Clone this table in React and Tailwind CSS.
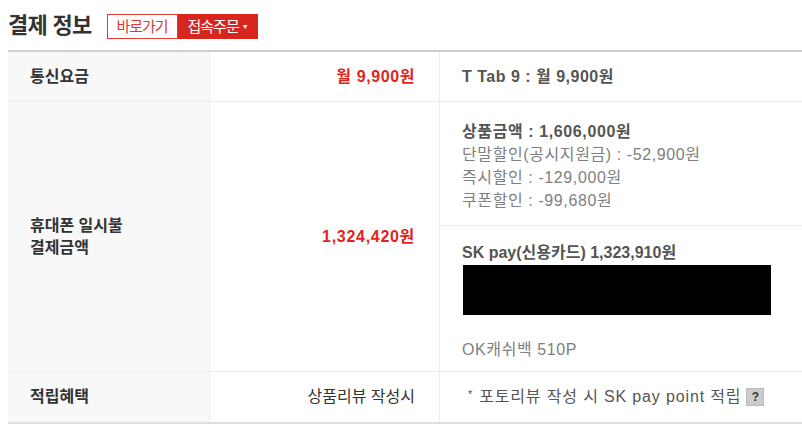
export default function App() {
  const font = { fontFamily: '"Liberation Sans", "Noto Sans CJK KR", sans-serif' };
  return (
    <div className="w-[802px] h-[438px] bg-white overflow-hidden" style={font}>
      <div className="flex items-center h-[50px] pl-[8px] pt-[1px]">
        <span className="text-[22px] font-bold text-[#333] tracking-[-0.7px] leading-none">결제 정보</span>
        <div className="flex ml-[15px] h-[25px] mt-[1px]">
          <span className="w-[71px] flex items-center justify-center border border-[#e23a2f] text-[#e23a2f] text-[15px] tracking-[-1px] leading-none bg-white">바로가기</span>
          <span className="w-[80px] flex items-center justify-center bg-[#d7261e] text-white text-[15px] tracking-[-1px] leading-none">
            접속주문
            <span className="ml-[3px] text-[7px]">▼</span>
          </span>
        </div>
      </div>
      <div className="ml-[8px] border-t-2 border-[#cfcfcf] border-b-2 border-b-[#dedede]">
        {/* Row 1 */}
        <div className="flex h-[50px] border-b border-[#ededed]">
          <div className="w-[202px] bg-[#f8f8f8] border-r border-[#ededed] flex items-center pl-[22px] text-[16px] font-bold text-[#333]">통신요금</div>
          <div className="w-[230px] border-r border-[#ededed] flex items-center justify-end pr-[24px] text-[16px] font-bold text-[#e0261c] tracking-[0.6px]">월 9,900원</div>
          <div className="flex-1 flex items-center pl-[22px] text-[16px] font-bold text-[#555] tracking-[0.5px]">T Tab 9 : 월 9,900원</div>
        </div>
        {/* Row 2 */}
        <div className="flex h-[270px] border-b border-[#ededed]">
          <div className="w-[202px] bg-[#f8f8f8] border-r border-[#ededed] flex flex-col justify-center pl-[22px] text-[16px] font-bold text-[#333] leading-[22px]">
            <span>휴대폰 일시불</span>
            <span>결제금액</span>
          </div>
          <div className="w-[230px] border-r border-[#ededed] flex items-center justify-end pr-[24px] text-[16px] font-bold text-[#e0261c] tracking-[0.7px]">1,324,420원</div>
          <div className="flex-1 flex flex-col tracking-[0.6px]">
            <div className="h-[124px] border-b border-[#ededed] pl-[22px] pt-[18px] text-[16px] leading-[23px] text-[#808080]">
              <div className="font-bold text-[#555]">상품금액 : 1,606,000원</div>
              <div>단말할인(공시지원금) : -52,900원</div>
              <div>즉시할인 : -129,000원</div>
              <div>쿠폰할인 : -99,680원</div>
            </div>
            <div className="flex-1 pl-[22px] pt-[15px] text-[16px] leading-[23px] text-[#808080]">
              <div className="font-bold text-[#555] tracking-[0px]">SK pay(신용카드) 1,323,910원</div>
              <div className="w-[308px] h-[50px] bg-black mt-[1px] ml-[1px]"></div>
              <div className="mt-[23px]">OK캐쉬백 510P</div>
            </div>
          </div>
        </div>
        {/* Row 3 */}
        <div className="flex h-[50px]">
          <div className="w-[202px] bg-[#f8f8f8] border-r border-[#ededed] flex items-center pl-[22px] text-[16px] font-bold text-[#333]">적립혜택</div>
          <div className="w-[230px] border-r border-[#ededed] flex items-center justify-end pr-[24px] text-[16px] text-[#333]">상품리뷰 작성시</div>
          <div className="flex-1 flex items-center pl-[28px] text-[16px] text-[#555] tracking-[0.85px]">
            <span className="text-[11px] mr-[6px] -mt-[6px]">*</span>
            <span>포토리뷰 작성 시 SK pay point 적립</span>
            <span className="ml-[5px] w-[18px] h-[18px] bg-[#cccccc] border border-[#bbb] flex items-center justify-center text-[12px] font-bold text-[#333] leading-none tracking-normal">?</span>
          </div>
        </div>
      </div>
    </div>
  );
}
